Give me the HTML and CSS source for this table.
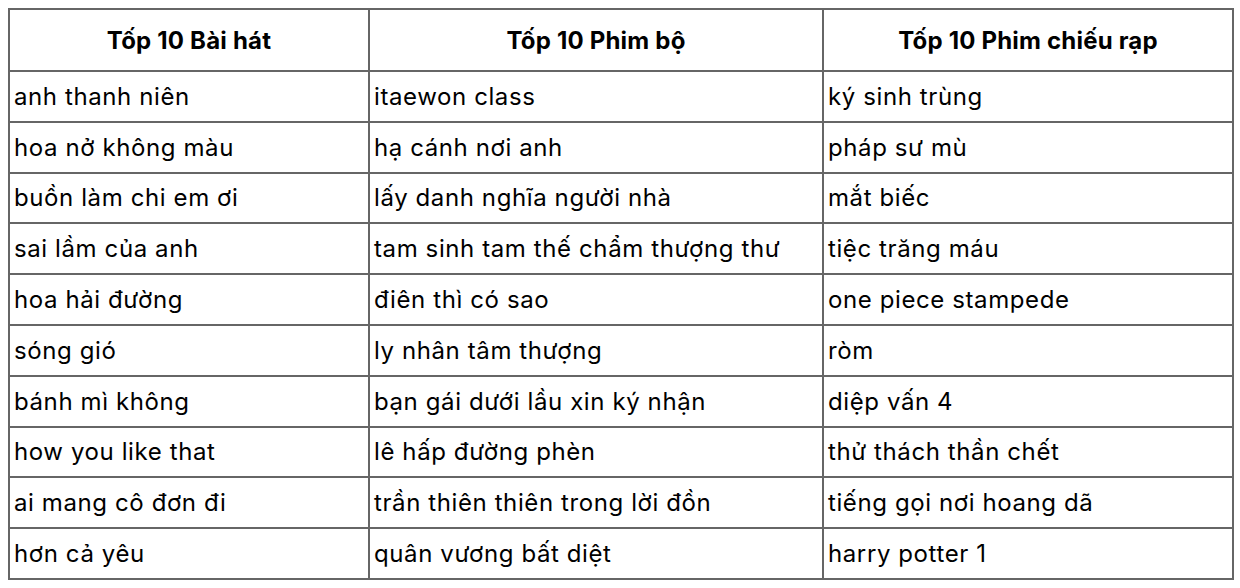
FILE: index.html
```html
<!DOCTYPE html>
<html lang="vi">
<head>
<meta charset="utf-8">
<link rel="stylesheet" href="styles.css">
</head>
<body>
<table class="top">
  <colgroup>
    <col class="c1"><col class="c2"><col class="c3">
  </colgroup>
  <thead>
    <tr class="head"><th>Tốp 10 Bài hát</th><th>Tốp 10 Phim bộ</th><th>Tốp 10 Phim chiếu rạp</th></tr>
  </thead>
  <tbody>
    <tr><td>anh thanh niên</td><td>itaewon class</td><td>ký sinh trùng</td></tr>
    <tr><td>hoa nở không màu</td><td>hạ cánh nơi anh</td><td>pháp sư mù</td></tr>
    <tr><td>buồn làm chi em ơi</td><td>lấy danh nghĩa người nhà</td><td>mắt biếc</td></tr>
    <tr><td>sai lầm của anh</td><td>tam sinh tam thế chẩm thượng thư</td><td>tiệc trăng máu</td></tr>
    <tr><td>hoa hải đường</td><td>điên thì có sao</td><td>one piece stampede</td></tr>
    <tr><td>sóng gió</td><td>ly nhân tâm thượng</td><td>ròm</td></tr>
    <tr><td>bánh mì không</td><td>bạn gái dưới lầu xin ký nhận</td><td>diệp vấn 4</td></tr>
    <tr><td>how you like that</td><td>lê hấp đường phèn</td><td>thử thách thần chết</td></tr>
    <tr><td>ai mang cô đơn đi</td><td>trần thiên thiên trong lời đồn</td><td>tiếng gọi nơi hoang dã</td></tr>
    <tr><td>hơn cả yêu</td><td>quân vương bất diệt</td><td>harry potter 1</td></tr>
  </tbody>
</table>
</body>
</html>
```
FILE: styles.css
```css
html, body {
  margin: 0;
  padding: 0;
  background: #ffffff;
}
body {
  padding: 8px;
  font-family: Inter, "Noto Sans", sans-serif;
  color: #000;
}
.top {
  width: 1224px;
  border-collapse: collapse;
  table-layout: fixed;
  border: 2px solid #666666;
}
.c1 { width: 360px; }
.c2 { width: 454px; }
.c3 { width: 410px; }
.top th, .top td {
  border: 2px solid #666666;
  padding: 0 4px;
  font-size: 24px;
  text-align: left;
  white-space: nowrap;
}
.top th {
  text-align: center;
  font-weight: 700;
  height: 60px;
  letter-spacing: 0.2px;
}
.top td {
  height: 48.8px;
  font-weight: 400;
  letter-spacing: 0.6px;
}
```
